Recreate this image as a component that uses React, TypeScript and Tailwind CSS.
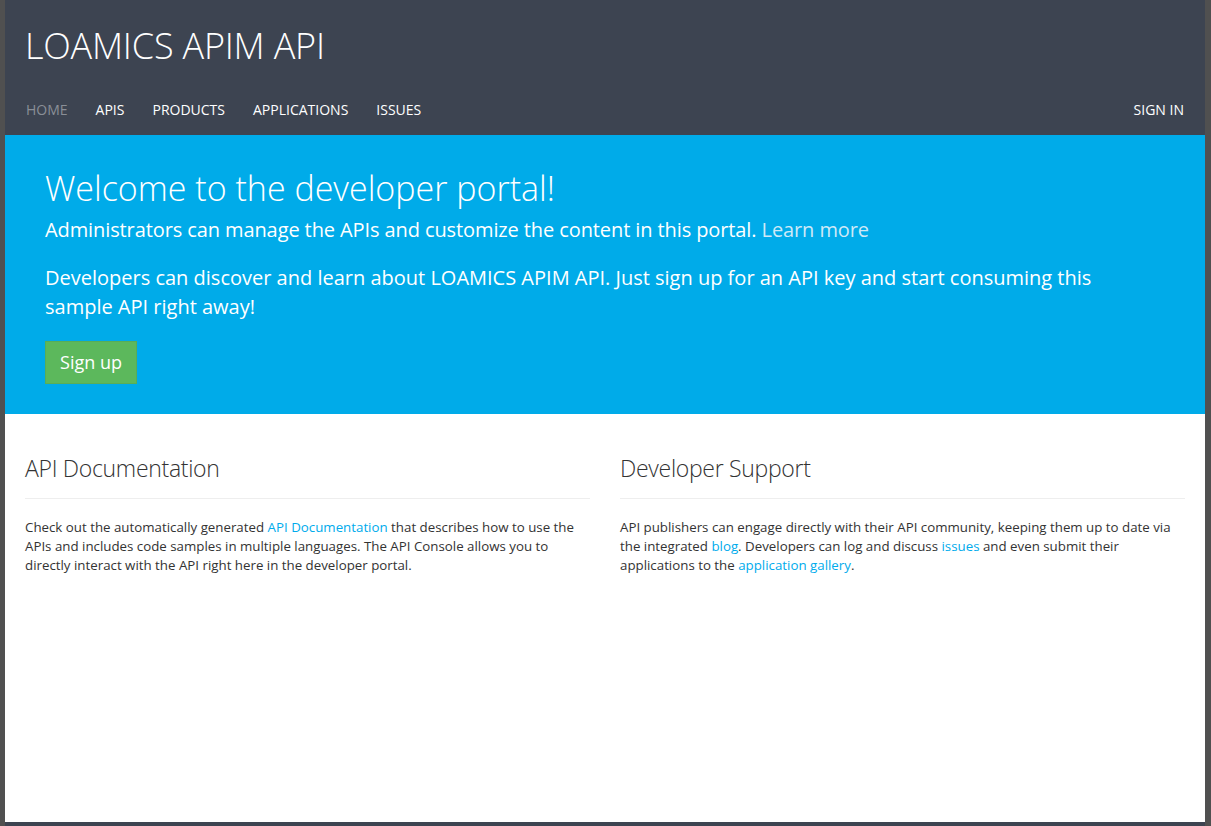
const navItems = ["APIS", "PRODUCTS", "APPLICATIONS", "ISSUES"];

const App = () => {
  return (
    <div className="flex h-[826px] flex-col border-l-[5px] border-r-[6px] border-[#505050] bg-white font-['Open_Sans',sans-serif] text-[#333]">
      <header className="bg-[#3d4451] px-5">
        <h1 className="pt-[22px] text-[36px] leading-[48px] font-light tracking-[-0.2px] text-white">
          LOAMICS APIM API
        </h1>
        <nav className="mt-[30px] flex h-[35px] items-start text-[14px] leading-5 uppercase">
          <div className="flex gap-[28px] pl-[1px]">
            <a className="text-[#8a8f97]">Home</a>
            {navItems.map((item) => (
              <a key={item} className="text-white">
                {item}
              </a>
            ))}
          </div>
          <a className="ml-auto pr-[1px] text-white">Sign in</a>
        </nav>
      </header>

      <section className="h-[279px] bg-[#00abe9] px-10 pt-[31px] text-white">
        <h2 className="text-[34px] leading-[44px] font-light">
          Welcome to the developer portal!
        </h2>
        <p className="mt-[5px] text-[20px] leading-[30px] tracking-[-0.1px]">
          Administrators can manage the APIs and customize the content in this
          portal. <a className="text-[#cfe9f7]">Learn more</a>
        </p>
        <p className="mt-[18px] max-w-[1080px] text-[20px] leading-[29px]">
          Developers can discover and learn about LOAMICS APIM API. Just sign
          up for an API key and start consuming this sample API right away!
        </p>
        <button className="mt-[20px] h-[43px] w-[92px] border border-[#58ad58] bg-[#5cb85c] text-[18px] text-white">
          Sign up
        </button>
      </section>

      <main className="grid flex-1 grid-cols-2 gap-[30px] px-5 pt-[38px]">
        <div>
          <h3 className="text-[23px] leading-8 font-light tracking-[-0.3px]">
            API Documentation
          </h3>
          <hr className="mt-[14px] border-[#eee]" />
          <p className="mt-[19px] text-[13.3px] leading-[19px]">
            Check out the automatically generated{" "}
            <a className="text-[#00abec]">API Documentation</a> that describes
            how to use the APIs and includes code samples in multiple languages.
            The API Console allows you to directly interact with the API right
            here in the developer portal.
          </p>
        </div>
        <div>
          <h3 className="text-[23px] leading-8 font-light tracking-[-0.3px]">
            Developer Support
          </h3>
          <hr className="mt-[14px] border-[#eee]" />
          <p className="mt-[19px] text-[13.3px] leading-[19px]">
            API publishers can engage directly with their API community, keeping
            them up to date via the integrated{" "}
            <a className="text-[#00abec]">blog</a>. Developers can log and
            discuss <a className="text-[#00abec]">issues</a> and even submit
            their applications to the{" "}
            <a className="text-[#00abec]">application gallery</a>.
          </p>
        </div>
      </main>

      <footer className="h-[4px] bg-[#3d4451]" />
    </div>
  );
};

export default App;
